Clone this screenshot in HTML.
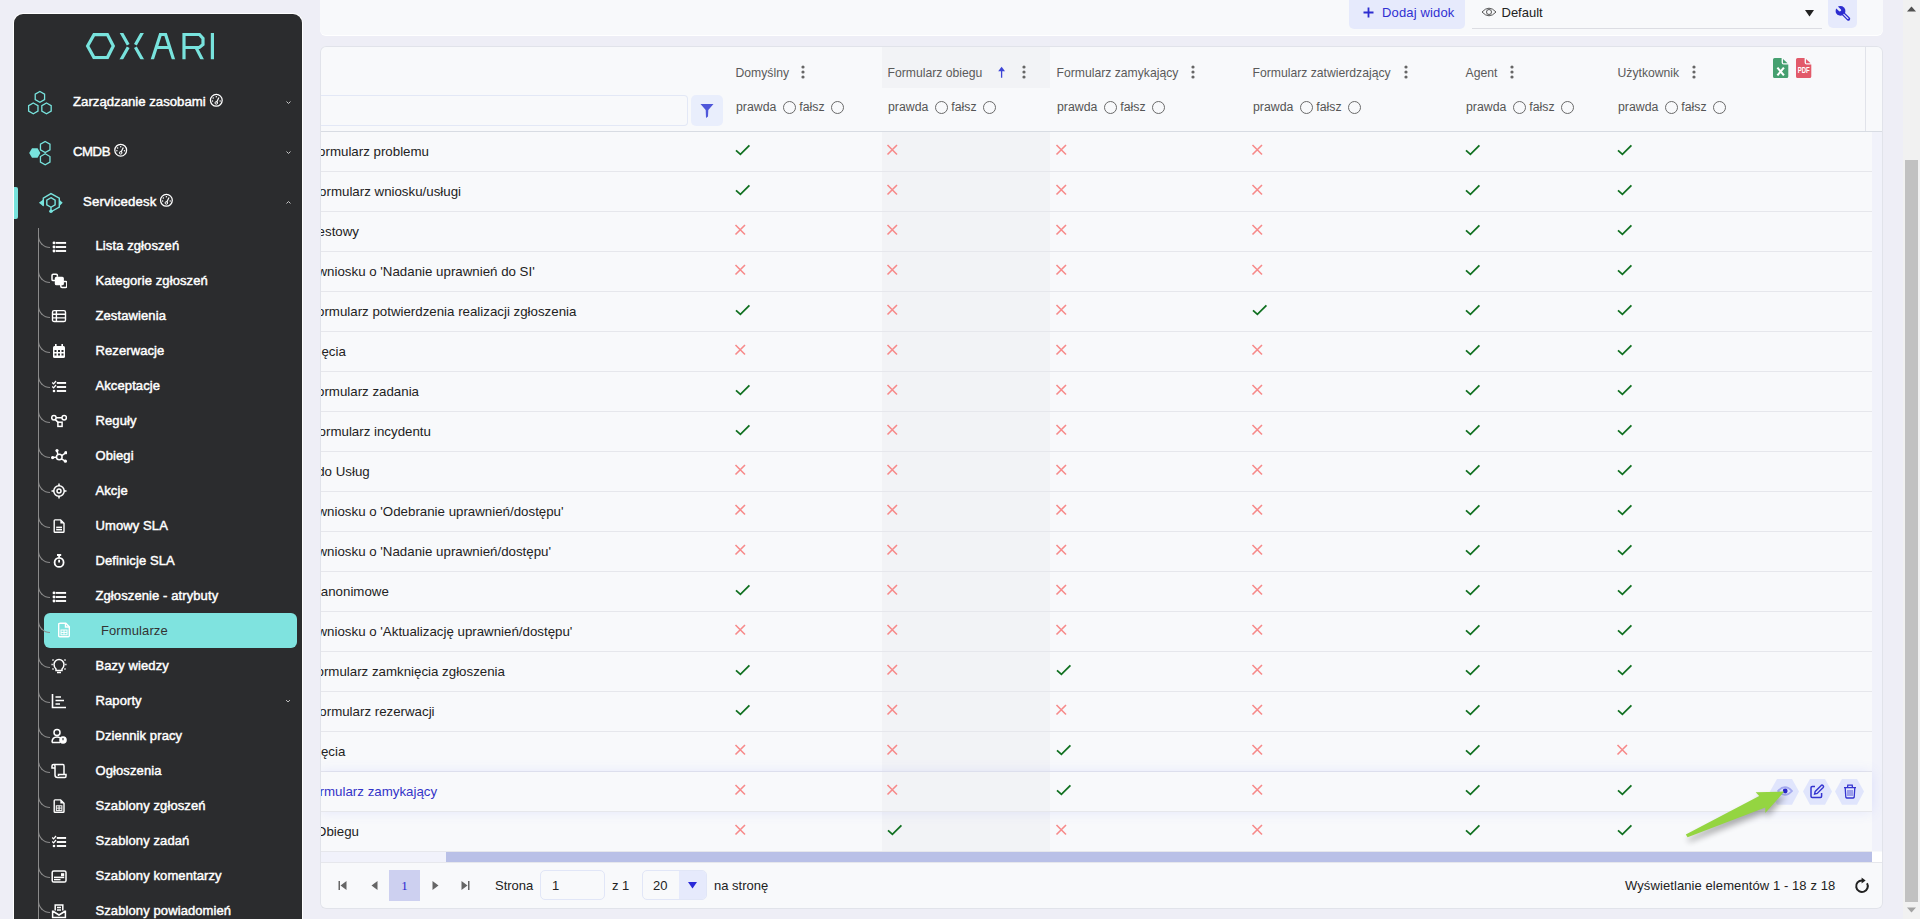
<!DOCTYPE html>
<html><head><meta charset="utf-8">
<style>
*{box-sizing:border-box;margin:0;padding:0}
html,body{width:1920px;height:919px;overflow:hidden;background:#eeeef6;font-family:"Liberation Sans",sans-serif;position:relative}
.abs{position:absolute}
#sb{position:absolute;left:14px;top:14px;width:288px;height:930px;background:#2b2c2e;border-radius:9px 9px 0 0;box-shadow:0 0 0 1px #fff}
.ti{position:absolute;left:0;height:35px;line-height:36px;color:#fff;font-weight:normal;font-size:13.4px;white-space:nowrap;-webkit-text-stroke:0.45px #fff}
.si{position:absolute;left:81.5px;letter-spacing:0.1px;height:35px;line-height:36px;color:#fff;font-weight:normal;font-size:13px;white-space:nowrap;-webkit-text-stroke:0.45px #fff}
.sic{position:absolute;left:37px;width:16px;height:16px}
.tree{position:absolute;left:24px;width:12px;height:20px;border-left:1px solid #8a8a8a;border-bottom:1px solid #8a8a8a;border-bottom-left-radius:12px}
#top{position:absolute;left:320px;top:-10px;width:1563px;height:45px;background:#f8f9fb;border-radius:0 0 6px 6px;box-shadow:0 1px 0 #fff}
#card{position:absolute;left:320px;top:46px;width:1562.5px;height:862.5px;background:#f8f9fb;box-shadow:inset 0 0 0 1px #e1e3ea;border-radius:6px;overflow:hidden}
.nm{position:absolute;height:40px;line-height:40px;font-size:13.3px;white-space:nowrap}
.rl{position:absolute;left:0;width:1552px;height:1px;background:#e6e7ec}
.ic{position:absolute;width:16px;height:12px}
.ic svg{display:block}
.hd{position:absolute;font-size:12.2px;color:#5a5a5a;white-space:nowrap;line-height:20px}
.fl{position:absolute;font-size:12.3px;color:#555;white-space:nowrap;line-height:20px}
.rad{display:inline-block;width:13px;height:13px;border:1px solid #6a6a6a;border-radius:50%;vertical-align:-3px;margin:0 3.5px 0 6.5px}
.keb{position:absolute;width:4px;height:14px}
.pf{position:absolute;font-size:13px;color:#222;white-space:nowrap}
</style></head><body>

<!-- SIDEBAR -->
<div id="sb">
  <svg class="abs" style="left:-14px;top:-14px" width="302" height="240" viewBox="0 0 302 240">
    <defs><clipPath id="lc"><rect x="80" y="32.9" width="140" height="26.3"/></clipPath></defs>
    <g fill="none" stroke="#78e3dd" stroke-width="3.2" clip-path="url(#lc)">
      <path d="M87.6 46 L94 34.6 L107.4 34.6 L113.3 46 L107.4 57.6 L94 57.6 Z"/>
      <path d="M120.4 31 L128.2 44.8 M128.2 47.2 L120.4 61 M143.2 31 L135.4 44.8 M135.4 47.2 L143.2 61"/>
      <path d="M151.8 61 L160.4 34.5 L165.6 34.5 L174 61 M156.6 47.5 L169.4 47.5"/>
      <path d="M184 61 L184 34.5 L199.4 34.5 L203 38.4 L203 44.6 L199.4 47.5 L184 47.5 M196 47.5 L203 61"/>
      <path d="M212.4 31 L212.4 61"/>
    </g>
    <g fill="none" stroke="#78e3dd" stroke-width="1.3">
      <path d="M39.90 91.50 L44.58 94.20 L44.58 99.60 L39.90 102.30 L35.22 99.60 L35.22 94.20 Z"/><path d="M33.30 103.00 L37.98 105.70 L37.98 111.10 L33.30 113.80 L28.62 111.10 L28.62 105.70 Z"/><path d="M46.50 103.00 L51.18 105.70 L51.18 111.10 L46.50 113.80 L41.82 111.10 L41.82 105.70 Z"/>
      <path d="M45.20 141.50 L49.96 144.25 L49.96 149.75 L45.20 152.50 L40.44 149.75 L40.44 144.25 Z"/><path d="M45.20 153.80 L49.96 156.55 L49.96 162.05 L45.20 164.80 L40.44 162.05 L40.44 156.55 Z"/>
    </g>
    <path d="M37.60 148.15 L40.40 153.00 L37.60 157.85 L32.00 157.85 L29.20 153.00 L32.00 148.15 Z" fill="#78e3dd"/>
    <g fill="none" stroke="#78e3dd" stroke-width="1.4">
      <path d="M43.3 205.8 L43.3 198.1 L50.96 193.6 L59.3 198.1 L59.3 207.2 L51.5 211.5"/>
      <path d="M50.96 197.70 L55.12 200.10 L55.12 204.90 L50.96 207.30 L46.80 204.90 L46.80 200.10 Z"/>
      <path d="M50.96 207.3 L50.96 210.5"/>
    </g>
    <path d="M38.9 202.8 L43.6 199.2 L43.6 206.6 Z M62.7 202.8 L59 199.2 L59 206.6 Z" fill="#78e3dd"/>
    <circle cx="50.96" cy="211.3" r="1.8" fill="#78e3dd"/>
    <g><circle cx="216.3" cy="100.3" r="5.9" fill="none" stroke="#fff" stroke-width="1.25"/><g fill="#fff"><circle cx="216.3" cy="96.8" r="0.75"/><circle cx="213.20000000000002" cy="98.0" r="0.75"/><circle cx="212.5" cy="100.89999999999999" r="0.75"/><circle cx="220.10000000000002" cy="100.89999999999999" r="0.75"/></g><path d="M216.5 102.6 L218.9 97.5" stroke="#fff" stroke-width="1.2"/><circle cx="216.3" cy="102.89999999999999" r="1.3" fill="none" stroke="#fff" stroke-width="1"/></g>
    <g><circle cx="120.7" cy="150.2" r="5.9" fill="none" stroke="#fff" stroke-width="1.25"/><g fill="#fff"><circle cx="120.7" cy="146.7" r="0.75"/><circle cx="117.6" cy="147.9" r="0.75"/><circle cx="116.9" cy="150.8" r="0.75"/><circle cx="124.5" cy="150.8" r="0.75"/></g><path d="M120.9 152.5 L123.3 147.4" stroke="#fff" stroke-width="1.2"/><circle cx="120.7" cy="152.8" r="1.3" fill="none" stroke="#fff" stroke-width="1"/></g>
    <g><circle cx="166.4" cy="200.3" r="5.9" fill="none" stroke="#fff" stroke-width="1.25"/><g fill="#fff"><circle cx="166.4" cy="196.8" r="0.75"/><circle cx="163.3" cy="198.0" r="0.75"/><circle cx="162.6" cy="200.9" r="0.75"/><circle cx="170.20000000000002" cy="200.9" r="0.75"/></g><path d="M166.6 202.60000000000002 L169.0 197.5" stroke="#fff" stroke-width="1.2"/><circle cx="166.4" cy="202.9" r="1.3" fill="none" stroke="#fff" stroke-width="1"/></g>
    <g fill="none" stroke="#c8c8c8" stroke-width="1"><path d="M286.5 101.5 L288.5 103.5 L290.5 101.5"/><path d="M286.5 151.5 L288.5 153.5 L290.5 151.5"/><path d="M286.5 203.5 L288.5 201.5 L290.5 203.5"/></g>
  </svg>
  <div class="ti" style="left:59px;top:69.5px;font-size:13.2px">Zarządzanie zasobami</div>
  <div class="ti" style="left:59px;top:119.5px;font-size:13.2px;letter-spacing:-0.45px">CMDB</div>
  <div class="abs" style="left:0;top:173px;width:4px;height:32px;background:#78e3dd;border-radius:0 2px 2px 0"></div>
  <div class="ti" style="left:69px;top:169.5px;font-size:13.2px;letter-spacing:0.15px">Servicedesk</div>
  <div class="abs" style="left:24px;top:214px;width:1px;height:720px;background:#8a8a8a"></div>
<div class="si" style="top:213.5px">Lista zgłoszeń</div>
<svg class="sic" style="top:224px" viewBox="0 0 16 16"><g fill="#fff"><circle cx="3" cy="4.9" r="1.45"/><circle cx="3" cy="9" r="1.45"/><circle cx="3" cy="13" r="1.45"/><rect x="4.8" y="3.95" width="10.3" height="1.9"/><rect x="4.8" y="8.05" width="10.3" height="1.9"/><rect x="4.8" y="12.05" width="10.3" height="1.9"/></g></svg>
<div class="tree" style="top:214px"></div>
<div class="si" style="top:248.5px">Kategorie zgłoszeń</div>
<svg class="sic" style="top:259px" viewBox="0 0 16 16"><g fill="none" stroke="#fff" stroke-width="1.5"><path d="M4.5 7.6 L2.2 7.6 Q1 7.6 1 6.4 L1 2.4 Q1 1.2 2.2 1.2 L5.2 1.2 Q6.4 1.2 6.4 2.4 L6.4 3.8"/><path d="M12.4 8.4 L14.6 8.4 Q15.8 8.4 15.8 9.6 L15.8 13.2 Q15.8 14.4 14.6 14.4 L11 14.4 Q9.8 14.4 9.8 13.2 L9.8 12"/></g><rect x="3.8" y="3.8" width="9.1" height="8.5" rx="1.6" fill="#fff"/></svg>
<div class="tree" style="top:249px"></div>
<div class="si" style="top:283.5px">Zestawienia</div>
<svg class="sic" style="top:294px" viewBox="0 0 16 16"><g fill="none" stroke="#fff" stroke-width="1.4"><rect x="1.5" y="2.6" width="13" height="10.9" rx="1.6"/><path d="M1.5 6.3 L14.5 6.3 M1.5 9.9 L14.5 9.9 M5.4 2.6 L5.4 13.5"/></g></svg>
<div class="tree" style="top:284px"></div>
<div class="si" style="top:318.5px">Rezerwacje</div>
<svg class="sic" style="top:329px" viewBox="0 0 16 16"><g fill="#fff"><rect x="2" y="3" width="12" height="12" rx="1.5"/><rect x="4" y="1" width="1.6" height="3"/><rect x="10.4" y="1" width="1.6" height="3"/></g><g fill="#2b2c2e"><rect x="3.5" y="7" width="2" height="2"/><rect x="7" y="7" width="2" height="2"/><rect x="10.5" y="7" width="2" height="2"/><rect x="3.5" y="10.5" width="2" height="2"/><rect x="7" y="10.5" width="2" height="2"/><rect x="10.5" y="10.5" width="2" height="2"/></g></svg>
<div class="tree" style="top:319px"></div>
<div class="si" style="top:353.5px">Akceptacje</div>
<svg class="sic" style="top:364px" viewBox="0 0 16 16"><g fill="none" stroke="#fff" stroke-width="1.3"><path d="M1.2 4.6 L2.6 5.9 L5 3 M1.2 8.6 L2.6 9.9 L5 7"/></g><g fill="#fff"><rect x="5.8" y="4" width="9.3" height="1.9"/><rect x="5.8" y="8.05" width="9.3" height="1.9"/><rect x="5.8" y="12.05" width="9.3" height="1.9"/><circle cx="3" cy="13" r="1.3"/></g></svg>
<div class="tree" style="top:354px"></div>
<div class="si" style="top:388.5px">Reguły</div>
<svg class="sic" style="top:399px" viewBox="0 0 16 16"><g fill="none" stroke="#fff" stroke-width="1.5"><circle cx="2.9" cy="4.8" r="2.2"/><circle cx="13.2" cy="4.8" r="2.2"/><rect x="6.9" y="9.2" width="4.2" height="4.2"/><path d="M5.1 4.8 L11 4.8 M4.3 6.6 L7.4 9.6"/></g></svg>
<div class="tree" style="top:389px"></div>
<div class="si" style="top:423.5px">Obiegi</div>
<svg class="sic" style="top:434px" viewBox="0 0 16 16"><g fill="none" stroke="#fff" stroke-width="1.5"><circle cx="8.3" cy="9" r="2.8"/><path d="M1 9.6 L5.5 9.2 M6 2.6 L6.9 6.6 M15 4.7 L10.8 7.6 M14.4 13.2 L10.4 10.8"/></g><g fill="#fff"><circle cx="1.6" cy="9.6" r="1.6"/><circle cx="6" cy="2.6" r="1.6"/><circle cx="14.8" cy="4.7" r="1.6"/><circle cx="14.4" cy="13.2" r="1.6"/></g></svg>
<div class="tree" style="top:424px"></div>
<div class="si" style="top:458.5px">Akcje</div>
<svg class="sic" style="top:469px" viewBox="0 0 16 16"><g fill="none" stroke="#fff" stroke-width="1.5"><circle cx="8" cy="8" r="5.2"/><circle cx="8" cy="8" r="2"/><path d="M8 0.5 L8 3 M8 13 L8 15.5 M0.5 8 L3 8 M13 8 L15.5 8"/></g></svg>
<div class="tree" style="top:459px"></div>
<div class="si" style="top:493.5px">Umowy SLA</div>
<svg class="sic" style="top:504px" viewBox="0 0 16 16"><path d="M4 1.9 L9.6 1.9 L13 5.3 L13 13.4 Q13 14.2 12.2 14.2 L4 14.2 Q3.2 14.2 3.2 13.4 L3.2 2.7 Q3.2 1.9 4 1.9 Z" fill="none" stroke="#fff" stroke-width="1.4"/><path d="M9.4 1.9 L9.4 5.5 L13 5.5 Z" fill="#fff"/><rect x="5.2" y="8.6" width="5.8" height="3.8" fill="#fff"/><path d="M5.2 10.5 L11 10.5" stroke="#2b2c2e" stroke-width="0.8"/></svg>
<div class="tree" style="top:494px"></div>
<div class="si" style="top:528.5px">Definicje SLA</div>
<svg class="sic" style="top:539px" viewBox="0 0 16 16"><g fill="none" stroke="#fff" stroke-width="1.8"><circle cx="8.1" cy="9.4" r="4.5"/><path d="M8.1 9.4 L8.1 6.8 M6 2 L10.2 2 M8.1 2 L8.1 4.6"/></g></svg>
<div class="tree" style="top:529px"></div>
<div class="si" style="top:563.5px">Zgłoszenie - atrybuty</div>
<svg class="sic" style="top:574px" viewBox="0 0 16 16"><g fill="#fff"><circle cx="3" cy="4.9" r="1.45"/><circle cx="3" cy="9" r="1.45"/><circle cx="3" cy="13" r="1.45"/><rect x="4.8" y="3.95" width="10.3" height="1.9"/><rect x="4.8" y="8.05" width="10.3" height="1.9"/><rect x="4.8" y="12.05" width="10.3" height="1.9"/></g></svg>
<div class="tree" style="top:564px"></div>
<div class="abs" style="left:30px;top:598.5px;width:253px;height:35px;background:#7fe3df;border-radius:6px"></div>
<div class="si" style="left:87px;top:598.5px;color:#333;font-weight:normal;font-size:13px;-webkit-text-stroke:0;left:87px">Formularze</div>
<svg class="sic" style="left:42px;top:608px" viewBox="0 0 16 16"><g fill="none" stroke="#fff" stroke-width="1.4"><path d="M3.5 1.2 L9.8 1.2 L13.3 4.7 L13.3 13.8 Q13.3 14.8 12.3 14.8 L3.7 14.8 Q2.7 14.8 2.7 13.8 L2.7 2.2 Q2.7 1.2 3.7 1.2 Z"/><path d="M9.5 1.2 L9.5 5 L13.3 5"/></g><g fill="none" stroke="#fff" stroke-width="1"><rect x="5" y="8" width="6" height="4.8"/><path d="M5 10.4 L11 10.4 M8 8 L8 12.8"/></g></svg>
<div class="tree" style="top:599px"></div>
<div class="si" style="top:633.5px">Bazy wiedzy</div>
<svg class="sic" style="top:644px" viewBox="0 0 16 16"><g fill="none" stroke="#fff" stroke-width="1.5"><path d="M5 11 Q3 9 3 6.5 A5 5 0 0 1 13 6.5 Q13 9 11 11 L11 12.5 L5 12.5 Z"/><path d="M6 14.5 L10 14.5"/><path d="M0.5 6.5 L1.8 6.5 M14.2 6.5 L15.5 6.5 M1.5 1.5 L2.5 2.5 M14.5 1.5 L13.5 2.5 M1.5 11.5 L2.5 10.5 M14.5 11.5 L13.5 10.5"/></g></svg>
<div class="tree" style="top:634px"></div>
<div class="si" style="top:668.5px">Raporty</div>
<svg class="sic" style="top:679px" viewBox="0 0 16 16"><g fill="none" stroke="#fff" stroke-width="1.6"><path d="M1.5 1 L1.5 14.5 L15 14.5"/><path d="M4.5 4 L10 4 M4.5 7.5 L13 7.5 M4.5 11 L9 11"/></g></svg>
<div class="tree" style="top:669px"></div>
<svg class="abs" style="left:270px;top:684px" width="8" height="6" viewBox="0 0 8 6"><path d="M2 2 L4 4 L6 2" fill="none" stroke="#bbb" stroke-width="1"/></svg>
<div class="si" style="top:703.5px">Dziennik pracy</div>
<svg class="sic" style="top:714px" viewBox="0 0 16 16"><g fill="none" stroke="#fff" stroke-width="1.5"><circle cx="6" cy="4.5" r="3"/><path d="M1 14.5 Q1 9 6 9 Q8 9 9 9.8 M1 14.5 L9 14.5"/></g><circle cx="12" cy="12" r="3.8" fill="#fff"/><path d="M12 10 L12 12.3" stroke="#2b2c2e" stroke-width="1.1"/></svg>
<div class="tree" style="top:704px"></div>
<div class="si" style="top:738.5px">Ogłoszenia</div>
<svg class="sic" style="top:749px" viewBox="0 0 16 16"><g fill="none" stroke="#fff" stroke-width="1.5"><path d="M4 3 L4 12 Q4 14.5 6.5 14.5 L14 14.5 Q15 14.5 15 13 L15 11.5 L7.5 11.5 L7.5 13"/><path d="M4 3 Q4 1.5 2.5 1.5 Q1 1.5 1 3 L1 5 L4 5 M2.5 1.5 L12 1.5 Q13 1.5 13 3 L13 11.5"/></g></svg>
<div class="tree" style="top:739px"></div>
<div class="si" style="top:773.5px">Szablony zgłoszeń</div>
<svg class="sic" style="top:784px" viewBox="0 0 16 16"><g fill="none" stroke="#fff" stroke-width="1.4"><path d="M4 1.9 L9.6 1.9 L13 5.3 L13 13.4 Q13 14.2 12.2 14.2 L4 14.2 Q3.2 14.2 3.2 13.4 L3.2 2.7 Q3.2 1.9 4 1.9 Z"/></g><path d="M9.4 1.9 L9.4 5.5 L13 5.5 Z" fill="#fff"/><g fill="none" stroke="#fff" stroke-width="1"><rect x="5.3" y="7.8" width="5.6" height="4.6"/><path d="M5.3 10.1 L10.9 10.1 M8.1 7.8 L8.1 12.4"/></g></svg>
<div class="tree" style="top:774px"></div>
<div class="si" style="top:808.5px">Szablony zadań</div>
<svg class="sic" style="top:819px" viewBox="0 0 16 16"><g fill="none" stroke="#fff" stroke-width="1.3"><path d="M1.2 4.6 L2.6 5.9 L5 3 M1.2 8.6 L2.6 9.9 L5 7"/></g><g fill="#fff"><rect x="5.8" y="4" width="9.3" height="1.9"/><rect x="5.8" y="8.05" width="9.3" height="1.9"/><rect x="5.8" y="12.05" width="9.3" height="1.9"/><circle cx="3" cy="13" r="1.3"/></g></svg>
<div class="tree" style="top:809px"></div>
<div class="si" style="top:843.5px">Szablony komentarzy</div>
<svg class="sic" style="top:854px" viewBox="0 0 16 16"><rect x="1.2" y="3" width="13.8" height="11" rx="1.6" fill="none" stroke="#fff" stroke-width="1.5"/><g fill="#fff"><rect x="10" y="5.2" width="3.2" height="3"/><rect x="3" y="8.6" width="10.2" height="1.6"/><rect x="3" y="11" width="6.5" height="1.3"/></g></svg>
<div class="tree" style="top:844px"></div>
<div class="si" style="top:878.5px">Szablony powiadomień</div>
<svg class="sic" style="top:889px" viewBox="0 0 16 16"><g fill="none" stroke="#fff" stroke-width="1.5"><path d="M4.2 7.5 L4.2 2 L11.8 2 L11.8 7.5"/><path d="M1.6 7.5 L1.6 14.4 L14.4 14.4 L14.4 7.5 M1.6 8 L8 12 L14.4 8"/><path d="M6 4.6 L10 4.6 M6 7 L10 7"/></g></svg>
<div class="tree" style="top:879px"></div>
</div>

<!-- TOP BAR -->
<div id="top"></div>
<div class="abs" style="left:1349px;top:0;width:116px;height:29px;background:#e6eafc;border-radius:0 0 5px 5px"></div>
<svg class="abs" style="left:1363px;top:7px" width="11" height="11" viewBox="0 0 11 11"><path d="M5.5 0.5 L5.5 10.5 M0.5 5.5 L10.5 5.5" stroke="#2d2dd0" stroke-width="1.8"/></svg>
<div class="abs" style="left:1382px;top:4px;font-size:13px;line-height:17px;color:#3030d2;white-space:nowrap;letter-spacing:0.15px">Dodaj widok</div>
<div class="abs" style="left:1472px;top:28px;width:350px;height:1px;background:#dcdde3"></div>
<svg class="abs" style="left:1481px;top:6px" width="16" height="12" viewBox="0 0 16 12"><path d="M1 6 Q8 -1.6 15 6 Q8 13.6 1 6 Z" fill="none" stroke="#555" stroke-width="1"/><circle cx="8" cy="6" r="2.5" fill="none" stroke="#555" stroke-width="1"/></svg>
<div class="abs" style="left:1501.5px;top:4px;font-size:13px;line-height:17px;color:#222;white-space:nowrap">Default</div>
<svg class="abs" style="left:1805px;top:10px" width="9" height="7" viewBox="0 0 9 7"><path d="M0 0 L9 0 L4.5 6.5 Z" fill="#222"/></svg>
<div class="abs" style="left:1828px;top:0;width:29px;height:28px;background:#e6eafc;border-radius:0 0 5px 5px"></div>
<svg class="abs" style="left:1834px;top:5px" width="18" height="18" viewBox="0 0 18 18"><circle cx="6.5" cy="5.9" r="4.9" fill="#2d2dd0"/><path d="M2.2 1.6 L5.8 5.2" stroke="#e6eafc" stroke-width="2.6" stroke-linecap="round"/><path d="M9.2 8.8 L14.4 13.9" stroke="#2d2dd0" stroke-width="3.6" stroke-linecap="round"/><path d="M9.8 9.4 L14 13.5" stroke="#e6eafc" stroke-width="1.1" stroke-linecap="round"/></svg>

<!-- TABLE CARD -->
<div id="card">
<div class="abs" style="left:561.5px;top:1.0px;width:168px;height:41px;background:#f2f3f6"></div>
<div class="abs" style="left:561.5px;top:85.0px;width:168px;height:720px;background:#f2f3f6"></div>
<div class="hd" style="left:415.5px;top:16.9px">Domyślny</div>
<div class="keb" style="left:481.0px;top:19.1px"><svg width="4" height="14" viewBox="0 0 4 14"><circle cx="2" cy="2" r="1.6" fill="#666"/><circle cx="2" cy="7" r="1.6" fill="#666"/><circle cx="2" cy="12" r="1.6" fill="#666"/></svg></div>
<div class="fl" style="left:416.0px;top:50.9px">prawda<span class="rad"></span>fałsz<span class="rad"></span></div>
<div class="hd" style="left:567.5px;top:16.9px">Formularz obiegu</div>
<div class="keb" style="left:702.0px;top:19.1px"><svg width="4" height="14" viewBox="0 0 4 14"><circle cx="2" cy="2" r="1.6" fill="#666"/><circle cx="2" cy="7" r="1.6" fill="#666"/><circle cx="2" cy="12" r="1.6" fill="#666"/></svg></div>
<div class="fl" style="left:568.0px;top:50.9px">prawda<span class="rad"></span>fałsz<span class="rad"></span></div>
<div class="hd" style="left:736.5px;top:16.9px">Formularz zamykający</div>
<div class="keb" style="left:871.0px;top:19.1px"><svg width="4" height="14" viewBox="0 0 4 14"><circle cx="2" cy="2" r="1.6" fill="#666"/><circle cx="2" cy="7" r="1.6" fill="#666"/><circle cx="2" cy="12" r="1.6" fill="#666"/></svg></div>
<div class="fl" style="left:737.0px;top:50.9px">prawda<span class="rad"></span>fałsz<span class="rad"></span></div>
<div class="hd" style="left:932.5px;top:16.9px">Formularz zatwierdzający</div>
<div class="keb" style="left:1084.0px;top:19.1px"><svg width="4" height="14" viewBox="0 0 4 14"><circle cx="2" cy="2" r="1.6" fill="#666"/><circle cx="2" cy="7" r="1.6" fill="#666"/><circle cx="2" cy="12" r="1.6" fill="#666"/></svg></div>
<div class="fl" style="left:933.0px;top:50.9px">prawda<span class="rad"></span>fałsz<span class="rad"></span></div>
<div class="hd" style="left:1145.5px;top:16.9px">Agent</div>
<div class="keb" style="left:1190.0px;top:19.1px"><svg width="4" height="14" viewBox="0 0 4 14"><circle cx="2" cy="2" r="1.6" fill="#666"/><circle cx="2" cy="7" r="1.6" fill="#666"/><circle cx="2" cy="12" r="1.6" fill="#666"/></svg></div>
<div class="fl" style="left:1146.0px;top:50.9px">prawda<span class="rad"></span>fałsz<span class="rad"></span></div>
<div class="hd" style="left:1297.5px;top:16.9px">Użytkownik</div>
<div class="keb" style="left:1372.0px;top:19.1px"><svg width="4" height="14" viewBox="0 0 4 14"><circle cx="2" cy="2" r="1.6" fill="#666"/><circle cx="2" cy="7" r="1.6" fill="#666"/><circle cx="2" cy="12" r="1.6" fill="#666"/></svg></div>
<div class="fl" style="left:1298.0px;top:50.9px">prawda<span class="rad"></span>fałsz<span class="rad"></span></div>
<svg class="abs" style="left:677.0px;top:20.0px" width="9" height="13" viewBox="0 0 9 13"><path d="M4.6 11.8 L4.6 4" fill="none" stroke="#3d44d6" stroke-width="1.3"/><path d="M1.2 5.2 L4.6 0.8 L8 5.2 Z" fill="#3d44d6"/></svg>
<div class="abs" style="left:1.0px;top:49.0px;width:367px;height:31px;border:1px solid #e3e8f6;border-left:none;border-radius:0 4px 4px 0;background:#f8f9fb"></div>
<div class="abs" style="left:371.0px;top:49.0px;width:32px;height:31px;background:#e9eefc;border-radius:5px"></div>
<svg class="abs" style="left:380.0px;top:57.0px" width="14" height="16" viewBox="0 0 14 16"><path d="M0.5 1 L13.5 1 L8.3 7 L8 13.5 L6 15 L5.7 7 Z" fill="#4f57da"/></svg>
<svg class="abs" style="left:1453.4px;top:11.8px" width="16" height="21" viewBox="0 0 16 21"><path d="M0 1.6 Q0 0 1.6 0 L8.6 0 L8.6 4.6 Q8.6 6.6 10.6 6.6 L15.3 6.6 L15.3 18.4 Q15.3 20 13.7 20 L1.6 20 Q0 20 0 18.4 Z" fill="#46a070"/><path d="M10 0.9 L14.6 5.3 L10 5.3 Z" fill="#46a070"/><path d="M4.4 9.6 L10.9 17.4 M10.9 9.6 L4.4 17.4" stroke="#fff" stroke-width="2.1"/></svg>
<svg class="abs" style="left:1476.4px;top:11.8px" width="16" height="21" viewBox="0 0 16 21"><path d="M0 1.6 Q0 0 1.6 0 L8.6 0 L8.6 4.6 Q8.6 6.6 10.6 6.6 L15.3 6.6 L15.3 18.4 Q15.3 20 13.7 20 L1.6 20 Q0 20 0 18.4 Z" fill="#e25a6a"/><path d="M10 0.9 L14.6 5.3 L10 5.3 Z" fill="#e25a6a"/><text x="1.7" y="15" font-family="Liberation Sans" font-weight="bold" font-size="8.4" fill="#fff" textLength="12" lengthAdjust="spacingAndGlyphs">PDF</text></svg>
<div class="abs" style="left:0.0px;top:85.0px;width:1562px;height:1px;background:#d8dce3"></div>
<div class="abs" style="left:1545.0px;top:1.0px;width:1px;height:84px;background:#e1e3ea"></div>
<div class="abs" style="left:1552.0px;top:86.0px;width:10px;height:719px;background:#f1f2fa"></div>
<div class="rl" style="left:0.0px;top:125.0px"></div>
<div class="nm" style="left:-1.9px;top:86.0px;color:#222">ormularz problemu</div>
<div class="ic" style="left:415.0px;top:98.0px"><svg width="16" height="12" viewBox="0 0 16 12"><path d="M1 6.3 L5.4 10.3 L14.4 1.3" fill="none" stroke="#107020" stroke-width="1.8"/></svg></div>
<div class="ic" style="left:566.0px;top:98.0px"><svg width="12" height="12" viewBox="0 0 12 12"><path d="M1.5 1 L11 10.5 M11 1 L1.5 10.5" fill="none" stroke="#f78a8a" stroke-width="1.6"/></svg></div>
<div class="ic" style="left:735.0px;top:98.0px"><svg width="12" height="12" viewBox="0 0 12 12"><path d="M1.5 1 L11 10.5 M11 1 L1.5 10.5" fill="none" stroke="#f78a8a" stroke-width="1.6"/></svg></div>
<div class="ic" style="left:931.0px;top:98.0px"><svg width="12" height="12" viewBox="0 0 12 12"><path d="M1.5 1 L11 10.5 M11 1 L1.5 10.5" fill="none" stroke="#f78a8a" stroke-width="1.6"/></svg></div>
<div class="ic" style="left:1145.0px;top:98.0px"><svg width="16" height="12" viewBox="0 0 16 12"><path d="M1 6.3 L5.4 10.3 L14.4 1.3" fill="none" stroke="#107020" stroke-width="1.8"/></svg></div>
<div class="ic" style="left:1297.0px;top:98.0px"><svg width="16" height="12" viewBox="0 0 16 12"><path d="M1 6.3 L5.4 10.3 L14.4 1.3" fill="none" stroke="#107020" stroke-width="1.8"/></svg></div>
<div class="rl" style="left:0.0px;top:165.0px"></div>
<div class="nm" style="left:-0.9px;top:126.0px;color:#222">ormularz wniosku/usługi</div>
<div class="ic" style="left:415.0px;top:138.0px"><svg width="16" height="12" viewBox="0 0 16 12"><path d="M1 6.3 L5.4 10.3 L14.4 1.3" fill="none" stroke="#107020" stroke-width="1.8"/></svg></div>
<div class="ic" style="left:566.0px;top:138.0px"><svg width="12" height="12" viewBox="0 0 12 12"><path d="M1.5 1 L11 10.5 M11 1 L1.5 10.5" fill="none" stroke="#f78a8a" stroke-width="1.6"/></svg></div>
<div class="ic" style="left:735.0px;top:138.0px"><svg width="12" height="12" viewBox="0 0 12 12"><path d="M1.5 1 L11 10.5 M11 1 L1.5 10.5" fill="none" stroke="#f78a8a" stroke-width="1.6"/></svg></div>
<div class="ic" style="left:931.0px;top:138.0px"><svg width="12" height="12" viewBox="0 0 12 12"><path d="M1.5 1 L11 10.5 M11 1 L1.5 10.5" fill="none" stroke="#f78a8a" stroke-width="1.6"/></svg></div>
<div class="ic" style="left:1145.0px;top:138.0px"><svg width="16" height="12" viewBox="0 0 16 12"><path d="M1 6.3 L5.4 10.3 L14.4 1.3" fill="none" stroke="#107020" stroke-width="1.8"/></svg></div>
<div class="ic" style="left:1297.0px;top:138.0px"><svg width="16" height="12" viewBox="0 0 16 12"><path d="M1 6.3 L5.4 10.3 L14.4 1.3" fill="none" stroke="#107020" stroke-width="1.8"/></svg></div>
<div class="rl" style="left:0.0px;top:205.0px"></div>
<div class="nm" style="left:-2.4px;top:166.0px;color:#222">estowy</div>
<div class="ic" style="left:414.0px;top:178.0px"><svg width="12" height="12" viewBox="0 0 12 12"><path d="M1.5 1 L11 10.5 M11 1 L1.5 10.5" fill="none" stroke="#f78a8a" stroke-width="1.6"/></svg></div>
<div class="ic" style="left:566.0px;top:178.0px"><svg width="12" height="12" viewBox="0 0 12 12"><path d="M1.5 1 L11 10.5 M11 1 L1.5 10.5" fill="none" stroke="#f78a8a" stroke-width="1.6"/></svg></div>
<div class="ic" style="left:735.0px;top:178.0px"><svg width="12" height="12" viewBox="0 0 12 12"><path d="M1.5 1 L11 10.5 M11 1 L1.5 10.5" fill="none" stroke="#f78a8a" stroke-width="1.6"/></svg></div>
<div class="ic" style="left:931.0px;top:178.0px"><svg width="12" height="12" viewBox="0 0 12 12"><path d="M1.5 1 L11 10.5 M11 1 L1.5 10.5" fill="none" stroke="#f78a8a" stroke-width="1.6"/></svg></div>
<div class="ic" style="left:1145.0px;top:178.0px"><svg width="16" height="12" viewBox="0 0 16 12"><path d="M1 6.3 L5.4 10.3 L14.4 1.3" fill="none" stroke="#107020" stroke-width="1.8"/></svg></div>
<div class="ic" style="left:1297.0px;top:178.0px"><svg width="16" height="12" viewBox="0 0 16 12"><path d="M1 6.3 L5.4 10.3 L14.4 1.3" fill="none" stroke="#107020" stroke-width="1.8"/></svg></div>
<div class="rl" style="left:0.0px;top:245.0px"></div>
<div class="nm" style="left:-2.5px;top:206.0px;color:#222">wniosku o &#39;Nadanie uprawnień do SI&#39;</div>
<div class="ic" style="left:414.0px;top:218.0px"><svg width="12" height="12" viewBox="0 0 12 12"><path d="M1.5 1 L11 10.5 M11 1 L1.5 10.5" fill="none" stroke="#f78a8a" stroke-width="1.6"/></svg></div>
<div class="ic" style="left:566.0px;top:218.0px"><svg width="12" height="12" viewBox="0 0 12 12"><path d="M1.5 1 L11 10.5 M11 1 L1.5 10.5" fill="none" stroke="#f78a8a" stroke-width="1.6"/></svg></div>
<div class="ic" style="left:735.0px;top:218.0px"><svg width="12" height="12" viewBox="0 0 12 12"><path d="M1.5 1 L11 10.5 M11 1 L1.5 10.5" fill="none" stroke="#f78a8a" stroke-width="1.6"/></svg></div>
<div class="ic" style="left:931.0px;top:218.0px"><svg width="12" height="12" viewBox="0 0 12 12"><path d="M1.5 1 L11 10.5 M11 1 L1.5 10.5" fill="none" stroke="#f78a8a" stroke-width="1.6"/></svg></div>
<div class="ic" style="left:1145.0px;top:218.0px"><svg width="16" height="12" viewBox="0 0 16 12"><path d="M1 6.3 L5.4 10.3 L14.4 1.3" fill="none" stroke="#107020" stroke-width="1.8"/></svg></div>
<div class="ic" style="left:1297.0px;top:218.0px"><svg width="16" height="12" viewBox="0 0 16 12"><path d="M1 6.3 L5.4 10.3 L14.4 1.3" fill="none" stroke="#107020" stroke-width="1.8"/></svg></div>
<div class="rl" style="left:0.0px;top:285.0px"></div>
<div class="nm" style="left:-3.0px;top:246.0px;color:#222">ormularz potwierdzenia realizacji zgłoszenia</div>
<div class="ic" style="left:415.0px;top:258.0px"><svg width="16" height="12" viewBox="0 0 16 12"><path d="M1 6.3 L5.4 10.3 L14.4 1.3" fill="none" stroke="#107020" stroke-width="1.8"/></svg></div>
<div class="ic" style="left:566.0px;top:258.0px"><svg width="12" height="12" viewBox="0 0 12 12"><path d="M1.5 1 L11 10.5 M11 1 L1.5 10.5" fill="none" stroke="#f78a8a" stroke-width="1.6"/></svg></div>
<div class="ic" style="left:735.0px;top:258.0px"><svg width="12" height="12" viewBox="0 0 12 12"><path d="M1.5 1 L11 10.5 M11 1 L1.5 10.5" fill="none" stroke="#f78a8a" stroke-width="1.6"/></svg></div>
<div class="ic" style="left:932.0px;top:258.0px"><svg width="16" height="12" viewBox="0 0 16 12"><path d="M1 6.3 L5.4 10.3 L14.4 1.3" fill="none" stroke="#107020" stroke-width="1.8"/></svg></div>
<div class="ic" style="left:1145.0px;top:258.0px"><svg width="16" height="12" viewBox="0 0 16 12"><path d="M1 6.3 L5.4 10.3 L14.4 1.3" fill="none" stroke="#107020" stroke-width="1.8"/></svg></div>
<div class="ic" style="left:1297.0px;top:258.0px"><svg width="16" height="12" viewBox="0 0 16 12"><path d="M1 6.3 L5.4 10.3 L14.4 1.3" fill="none" stroke="#107020" stroke-width="1.8"/></svg></div>
<div class="rl" style="left:0.0px;top:325.0px"></div>
<div class="nm" style="left:1.4px;top:286.0px;color:#222">ęcia</div>
<div class="ic" style="left:414.0px;top:298.0px"><svg width="12" height="12" viewBox="0 0 12 12"><path d="M1.5 1 L11 10.5 M11 1 L1.5 10.5" fill="none" stroke="#f78a8a" stroke-width="1.6"/></svg></div>
<div class="ic" style="left:566.0px;top:298.0px"><svg width="12" height="12" viewBox="0 0 12 12"><path d="M1.5 1 L11 10.5 M11 1 L1.5 10.5" fill="none" stroke="#f78a8a" stroke-width="1.6"/></svg></div>
<div class="ic" style="left:735.0px;top:298.0px"><svg width="12" height="12" viewBox="0 0 12 12"><path d="M1.5 1 L11 10.5 M11 1 L1.5 10.5" fill="none" stroke="#f78a8a" stroke-width="1.6"/></svg></div>
<div class="ic" style="left:931.0px;top:298.0px"><svg width="12" height="12" viewBox="0 0 12 12"><path d="M1.5 1 L11 10.5 M11 1 L1.5 10.5" fill="none" stroke="#f78a8a" stroke-width="1.6"/></svg></div>
<div class="ic" style="left:1145.0px;top:298.0px"><svg width="16" height="12" viewBox="0 0 16 12"><path d="M1 6.3 L5.4 10.3 L14.4 1.3" fill="none" stroke="#107020" stroke-width="1.8"/></svg></div>
<div class="ic" style="left:1297.0px;top:298.0px"><svg width="16" height="12" viewBox="0 0 16 12"><path d="M1 6.3 L5.4 10.3 L14.4 1.3" fill="none" stroke="#107020" stroke-width="1.8"/></svg></div>
<div class="rl" style="left:0.0px;top:365.0px"></div>
<div class="nm" style="left:-3.0px;top:326.0px;color:#222">ormularz zadania</div>
<div class="ic" style="left:415.0px;top:338.0px"><svg width="16" height="12" viewBox="0 0 16 12"><path d="M1 6.3 L5.4 10.3 L14.4 1.3" fill="none" stroke="#107020" stroke-width="1.8"/></svg></div>
<div class="ic" style="left:566.0px;top:338.0px"><svg width="12" height="12" viewBox="0 0 12 12"><path d="M1.5 1 L11 10.5 M11 1 L1.5 10.5" fill="none" stroke="#f78a8a" stroke-width="1.6"/></svg></div>
<div class="ic" style="left:735.0px;top:338.0px"><svg width="12" height="12" viewBox="0 0 12 12"><path d="M1.5 1 L11 10.5 M11 1 L1.5 10.5" fill="none" stroke="#f78a8a" stroke-width="1.6"/></svg></div>
<div class="ic" style="left:931.0px;top:338.0px"><svg width="12" height="12" viewBox="0 0 12 12"><path d="M1.5 1 L11 10.5 M11 1 L1.5 10.5" fill="none" stroke="#f78a8a" stroke-width="1.6"/></svg></div>
<div class="ic" style="left:1145.0px;top:338.0px"><svg width="16" height="12" viewBox="0 0 16 12"><path d="M1 6.3 L5.4 10.3 L14.4 1.3" fill="none" stroke="#107020" stroke-width="1.8"/></svg></div>
<div class="ic" style="left:1297.0px;top:338.0px"><svg width="16" height="12" viewBox="0 0 16 12"><path d="M1 6.3 L5.4 10.3 L14.4 1.3" fill="none" stroke="#107020" stroke-width="1.8"/></svg></div>
<div class="rl" style="left:0.0px;top:405.0px"></div>
<div class="nm" style="left:-1.4px;top:366.0px;color:#222">ormularz incydentu</div>
<div class="ic" style="left:415.0px;top:378.0px"><svg width="16" height="12" viewBox="0 0 16 12"><path d="M1 6.3 L5.4 10.3 L14.4 1.3" fill="none" stroke="#107020" stroke-width="1.8"/></svg></div>
<div class="ic" style="left:566.0px;top:378.0px"><svg width="12" height="12" viewBox="0 0 12 12"><path d="M1.5 1 L11 10.5 M11 1 L1.5 10.5" fill="none" stroke="#f78a8a" stroke-width="1.6"/></svg></div>
<div class="ic" style="left:735.0px;top:378.0px"><svg width="12" height="12" viewBox="0 0 12 12"><path d="M1.5 1 L11 10.5 M11 1 L1.5 10.5" fill="none" stroke="#f78a8a" stroke-width="1.6"/></svg></div>
<div class="ic" style="left:931.0px;top:378.0px"><svg width="12" height="12" viewBox="0 0 12 12"><path d="M1.5 1 L11 10.5 M11 1 L1.5 10.5" fill="none" stroke="#f78a8a" stroke-width="1.6"/></svg></div>
<div class="ic" style="left:1145.0px;top:378.0px"><svg width="16" height="12" viewBox="0 0 16 12"><path d="M1 6.3 L5.4 10.3 L14.4 1.3" fill="none" stroke="#107020" stroke-width="1.8"/></svg></div>
<div class="ic" style="left:1297.0px;top:378.0px"><svg width="16" height="12" viewBox="0 0 16 12"><path d="M1 6.3 L5.4 10.3 L14.4 1.3" fill="none" stroke="#107020" stroke-width="1.8"/></svg></div>
<div class="rl" style="left:0.0px;top:445.0px"></div>
<div class="nm" style="left:-2.8px;top:406.0px;color:#222">do Usług</div>
<div class="ic" style="left:414.0px;top:418.0px"><svg width="12" height="12" viewBox="0 0 12 12"><path d="M1.5 1 L11 10.5 M11 1 L1.5 10.5" fill="none" stroke="#f78a8a" stroke-width="1.6"/></svg></div>
<div class="ic" style="left:566.0px;top:418.0px"><svg width="12" height="12" viewBox="0 0 12 12"><path d="M1.5 1 L11 10.5 M11 1 L1.5 10.5" fill="none" stroke="#f78a8a" stroke-width="1.6"/></svg></div>
<div class="ic" style="left:735.0px;top:418.0px"><svg width="12" height="12" viewBox="0 0 12 12"><path d="M1.5 1 L11 10.5 M11 1 L1.5 10.5" fill="none" stroke="#f78a8a" stroke-width="1.6"/></svg></div>
<div class="ic" style="left:931.0px;top:418.0px"><svg width="12" height="12" viewBox="0 0 12 12"><path d="M1.5 1 L11 10.5 M11 1 L1.5 10.5" fill="none" stroke="#f78a8a" stroke-width="1.6"/></svg></div>
<div class="ic" style="left:1145.0px;top:418.0px"><svg width="16" height="12" viewBox="0 0 16 12"><path d="M1 6.3 L5.4 10.3 L14.4 1.3" fill="none" stroke="#107020" stroke-width="1.8"/></svg></div>
<div class="ic" style="left:1297.0px;top:418.0px"><svg width="16" height="12" viewBox="0 0 16 12"><path d="M1 6.3 L5.4 10.3 L14.4 1.3" fill="none" stroke="#107020" stroke-width="1.8"/></svg></div>
<div class="rl" style="left:0.0px;top:485.0px"></div>
<div class="nm" style="left:-2.5px;top:446.0px;color:#222">wniosku o &#39;Odebranie uprawnień/dostępu&#39;</div>
<div class="ic" style="left:414.0px;top:458.0px"><svg width="12" height="12" viewBox="0 0 12 12"><path d="M1.5 1 L11 10.5 M11 1 L1.5 10.5" fill="none" stroke="#f78a8a" stroke-width="1.6"/></svg></div>
<div class="ic" style="left:566.0px;top:458.0px"><svg width="12" height="12" viewBox="0 0 12 12"><path d="M1.5 1 L11 10.5 M11 1 L1.5 10.5" fill="none" stroke="#f78a8a" stroke-width="1.6"/></svg></div>
<div class="ic" style="left:735.0px;top:458.0px"><svg width="12" height="12" viewBox="0 0 12 12"><path d="M1.5 1 L11 10.5 M11 1 L1.5 10.5" fill="none" stroke="#f78a8a" stroke-width="1.6"/></svg></div>
<div class="ic" style="left:931.0px;top:458.0px"><svg width="12" height="12" viewBox="0 0 12 12"><path d="M1.5 1 L11 10.5 M11 1 L1.5 10.5" fill="none" stroke="#f78a8a" stroke-width="1.6"/></svg></div>
<div class="ic" style="left:1145.0px;top:458.0px"><svg width="16" height="12" viewBox="0 0 16 12"><path d="M1 6.3 L5.4 10.3 L14.4 1.3" fill="none" stroke="#107020" stroke-width="1.8"/></svg></div>
<div class="ic" style="left:1297.0px;top:458.0px"><svg width="16" height="12" viewBox="0 0 16 12"><path d="M1 6.3 L5.4 10.3 L14.4 1.3" fill="none" stroke="#107020" stroke-width="1.8"/></svg></div>
<div class="rl" style="left:0.0px;top:525.0px"></div>
<div class="nm" style="left:-2.5px;top:486.0px;color:#222">wniosku o &#39;Nadanie uprawnień/dostępu&#39;</div>
<div class="ic" style="left:414.0px;top:498.0px"><svg width="12" height="12" viewBox="0 0 12 12"><path d="M1.5 1 L11 10.5 M11 1 L1.5 10.5" fill="none" stroke="#f78a8a" stroke-width="1.6"/></svg></div>
<div class="ic" style="left:566.0px;top:498.0px"><svg width="12" height="12" viewBox="0 0 12 12"><path d="M1.5 1 L11 10.5 M11 1 L1.5 10.5" fill="none" stroke="#f78a8a" stroke-width="1.6"/></svg></div>
<div class="ic" style="left:735.0px;top:498.0px"><svg width="12" height="12" viewBox="0 0 12 12"><path d="M1.5 1 L11 10.5 M11 1 L1.5 10.5" fill="none" stroke="#f78a8a" stroke-width="1.6"/></svg></div>
<div class="ic" style="left:931.0px;top:498.0px"><svg width="12" height="12" viewBox="0 0 12 12"><path d="M1.5 1 L11 10.5 M11 1 L1.5 10.5" fill="none" stroke="#f78a8a" stroke-width="1.6"/></svg></div>
<div class="ic" style="left:1145.0px;top:498.0px"><svg width="16" height="12" viewBox="0 0 16 12"><path d="M1 6.3 L5.4 10.3 L14.4 1.3" fill="none" stroke="#107020" stroke-width="1.8"/></svg></div>
<div class="ic" style="left:1297.0px;top:498.0px"><svg width="16" height="12" viewBox="0 0 16 12"><path d="M1 6.3 L5.4 10.3 L14.4 1.3" fill="none" stroke="#107020" stroke-width="1.8"/></svg></div>
<div class="rl" style="left:0.0px;top:565.0px"></div>
<div class="nm" style="left:0.8px;top:526.0px;color:#222">anonimowe</div>
<div class="ic" style="left:415.0px;top:538.0px"><svg width="16" height="12" viewBox="0 0 16 12"><path d="M1 6.3 L5.4 10.3 L14.4 1.3" fill="none" stroke="#107020" stroke-width="1.8"/></svg></div>
<div class="ic" style="left:566.0px;top:538.0px"><svg width="12" height="12" viewBox="0 0 12 12"><path d="M1.5 1 L11 10.5 M11 1 L1.5 10.5" fill="none" stroke="#f78a8a" stroke-width="1.6"/></svg></div>
<div class="ic" style="left:735.0px;top:538.0px"><svg width="12" height="12" viewBox="0 0 12 12"><path d="M1.5 1 L11 10.5 M11 1 L1.5 10.5" fill="none" stroke="#f78a8a" stroke-width="1.6"/></svg></div>
<div class="ic" style="left:931.0px;top:538.0px"><svg width="12" height="12" viewBox="0 0 12 12"><path d="M1.5 1 L11 10.5 M11 1 L1.5 10.5" fill="none" stroke="#f78a8a" stroke-width="1.6"/></svg></div>
<div class="ic" style="left:1145.0px;top:538.0px"><svg width="16" height="12" viewBox="0 0 16 12"><path d="M1 6.3 L5.4 10.3 L14.4 1.3" fill="none" stroke="#107020" stroke-width="1.8"/></svg></div>
<div class="ic" style="left:1297.0px;top:538.0px"><svg width="16" height="12" viewBox="0 0 16 12"><path d="M1 6.3 L5.4 10.3 L14.4 1.3" fill="none" stroke="#107020" stroke-width="1.8"/></svg></div>
<div class="rl" style="left:0.0px;top:605.0px"></div>
<div class="nm" style="left:-2.5px;top:566.0px;color:#222">wniosku o &#39;Aktualizację uprawnień/dostępu&#39;</div>
<div class="ic" style="left:414.0px;top:578.0px"><svg width="12" height="12" viewBox="0 0 12 12"><path d="M1.5 1 L11 10.5 M11 1 L1.5 10.5" fill="none" stroke="#f78a8a" stroke-width="1.6"/></svg></div>
<div class="ic" style="left:566.0px;top:578.0px"><svg width="12" height="12" viewBox="0 0 12 12"><path d="M1.5 1 L11 10.5 M11 1 L1.5 10.5" fill="none" stroke="#f78a8a" stroke-width="1.6"/></svg></div>
<div class="ic" style="left:735.0px;top:578.0px"><svg width="12" height="12" viewBox="0 0 12 12"><path d="M1.5 1 L11 10.5 M11 1 L1.5 10.5" fill="none" stroke="#f78a8a" stroke-width="1.6"/></svg></div>
<div class="ic" style="left:931.0px;top:578.0px"><svg width="12" height="12" viewBox="0 0 12 12"><path d="M1.5 1 L11 10.5 M11 1 L1.5 10.5" fill="none" stroke="#f78a8a" stroke-width="1.6"/></svg></div>
<div class="ic" style="left:1145.0px;top:578.0px"><svg width="16" height="12" viewBox="0 0 16 12"><path d="M1 6.3 L5.4 10.3 L14.4 1.3" fill="none" stroke="#107020" stroke-width="1.8"/></svg></div>
<div class="ic" style="left:1297.0px;top:578.0px"><svg width="16" height="12" viewBox="0 0 16 12"><path d="M1 6.3 L5.4 10.3 L14.4 1.3" fill="none" stroke="#107020" stroke-width="1.8"/></svg></div>
<div class="rl" style="left:0.0px;top:645.0px"></div>
<div class="nm" style="left:-3.5px;top:606.0px;color:#222">ormularz zamknięcia zgłoszenia</div>
<div class="ic" style="left:415.0px;top:618.0px"><svg width="16" height="12" viewBox="0 0 16 12"><path d="M1 6.3 L5.4 10.3 L14.4 1.3" fill="none" stroke="#107020" stroke-width="1.8"/></svg></div>
<div class="ic" style="left:566.0px;top:618.0px"><svg width="12" height="12" viewBox="0 0 12 12"><path d="M1.5 1 L11 10.5 M11 1 L1.5 10.5" fill="none" stroke="#f78a8a" stroke-width="1.6"/></svg></div>
<div class="ic" style="left:736.0px;top:618.0px"><svg width="16" height="12" viewBox="0 0 16 12"><path d="M1 6.3 L5.4 10.3 L14.4 1.3" fill="none" stroke="#107020" stroke-width="1.8"/></svg></div>
<div class="ic" style="left:931.0px;top:618.0px"><svg width="12" height="12" viewBox="0 0 12 12"><path d="M1.5 1 L11 10.5 M11 1 L1.5 10.5" fill="none" stroke="#f78a8a" stroke-width="1.6"/></svg></div>
<div class="ic" style="left:1145.0px;top:618.0px"><svg width="16" height="12" viewBox="0 0 16 12"><path d="M1 6.3 L5.4 10.3 L14.4 1.3" fill="none" stroke="#107020" stroke-width="1.8"/></svg></div>
<div class="ic" style="left:1297.0px;top:618.0px"><svg width="16" height="12" viewBox="0 0 16 12"><path d="M1 6.3 L5.4 10.3 L14.4 1.3" fill="none" stroke="#107020" stroke-width="1.8"/></svg></div>
<div class="rl" style="left:0.0px;top:685.0px"></div>
<div class="nm" style="left:-0.7px;top:646.0px;color:#222">ormularz rezerwacji</div>
<div class="ic" style="left:415.0px;top:658.0px"><svg width="16" height="12" viewBox="0 0 16 12"><path d="M1 6.3 L5.4 10.3 L14.4 1.3" fill="none" stroke="#107020" stroke-width="1.8"/></svg></div>
<div class="ic" style="left:566.0px;top:658.0px"><svg width="12" height="12" viewBox="0 0 12 12"><path d="M1.5 1 L11 10.5 M11 1 L1.5 10.5" fill="none" stroke="#f78a8a" stroke-width="1.6"/></svg></div>
<div class="ic" style="left:735.0px;top:658.0px"><svg width="12" height="12" viewBox="0 0 12 12"><path d="M1.5 1 L11 10.5 M11 1 L1.5 10.5" fill="none" stroke="#f78a8a" stroke-width="1.6"/></svg></div>
<div class="ic" style="left:931.0px;top:658.0px"><svg width="12" height="12" viewBox="0 0 12 12"><path d="M1.5 1 L11 10.5 M11 1 L1.5 10.5" fill="none" stroke="#f78a8a" stroke-width="1.6"/></svg></div>
<div class="ic" style="left:1145.0px;top:658.0px"><svg width="16" height="12" viewBox="0 0 16 12"><path d="M1 6.3 L5.4 10.3 L14.4 1.3" fill="none" stroke="#107020" stroke-width="1.8"/></svg></div>
<div class="ic" style="left:1297.0px;top:658.0px"><svg width="16" height="12" viewBox="0 0 16 12"><path d="M1 6.3 L5.4 10.3 L14.4 1.3" fill="none" stroke="#107020" stroke-width="1.8"/></svg></div>
<div class="rl" style="left:0.0px;top:725.0px"></div>
<div class="nm" style="left:0.9px;top:686.0px;color:#222">ęcia</div>
<div class="ic" style="left:414.0px;top:698.0px"><svg width="12" height="12" viewBox="0 0 12 12"><path d="M1.5 1 L11 10.5 M11 1 L1.5 10.5" fill="none" stroke="#f78a8a" stroke-width="1.6"/></svg></div>
<div class="ic" style="left:566.0px;top:698.0px"><svg width="12" height="12" viewBox="0 0 12 12"><path d="M1.5 1 L11 10.5 M11 1 L1.5 10.5" fill="none" stroke="#f78a8a" stroke-width="1.6"/></svg></div>
<div class="ic" style="left:736.0px;top:698.0px"><svg width="16" height="12" viewBox="0 0 16 12"><path d="M1 6.3 L5.4 10.3 L14.4 1.3" fill="none" stroke="#107020" stroke-width="1.8"/></svg></div>
<div class="ic" style="left:931.0px;top:698.0px"><svg width="12" height="12" viewBox="0 0 12 12"><path d="M1.5 1 L11 10.5 M11 1 L1.5 10.5" fill="none" stroke="#f78a8a" stroke-width="1.6"/></svg></div>
<div class="ic" style="left:1145.0px;top:698.0px"><svg width="16" height="12" viewBox="0 0 16 12"><path d="M1 6.3 L5.4 10.3 L14.4 1.3" fill="none" stroke="#107020" stroke-width="1.8"/></svg></div>
<div class="ic" style="left:1296.0px;top:698.0px"><svg width="12" height="12" viewBox="0 0 12 12"><path d="M1.5 1 L11 10.5 M11 1 L1.5 10.5" fill="none" stroke="#f78a8a" stroke-width="1.6"/></svg></div>
<div class="abs" style="left:0.0px;top:726.0px;width:1552px;height:40px;background:transparent;box-shadow:0 0 12px rgba(90,110,255,0.13)"></div>
<div class="rl" style="left:0.0px;top:765.0px"></div>
<div class="nm" style="left:-0.4px;top:726.0px;color:#3434c8">rmularz zamykający</div>
<div class="ic" style="left:414.0px;top:738.0px"><svg width="12" height="12" viewBox="0 0 12 12"><path d="M1.5 1 L11 10.5 M11 1 L1.5 10.5" fill="none" stroke="#f78a8a" stroke-width="1.6"/></svg></div>
<div class="ic" style="left:566.0px;top:738.0px"><svg width="12" height="12" viewBox="0 0 12 12"><path d="M1.5 1 L11 10.5 M11 1 L1.5 10.5" fill="none" stroke="#f78a8a" stroke-width="1.6"/></svg></div>
<div class="ic" style="left:736.0px;top:738.0px"><svg width="16" height="12" viewBox="0 0 16 12"><path d="M1 6.3 L5.4 10.3 L14.4 1.3" fill="none" stroke="#107020" stroke-width="1.8"/></svg></div>
<div class="ic" style="left:931.0px;top:738.0px"><svg width="12" height="12" viewBox="0 0 12 12"><path d="M1.5 1 L11 10.5 M11 1 L1.5 10.5" fill="none" stroke="#f78a8a" stroke-width="1.6"/></svg></div>
<div class="ic" style="left:1145.0px;top:738.0px"><svg width="16" height="12" viewBox="0 0 16 12"><path d="M1 6.3 L5.4 10.3 L14.4 1.3" fill="none" stroke="#107020" stroke-width="1.8"/></svg></div>
<div class="ic" style="left:1297.0px;top:738.0px"><svg width="16" height="12" viewBox="0 0 16 12"><path d="M1 6.3 L5.4 10.3 L14.4 1.3" fill="none" stroke="#107020" stroke-width="1.8"/></svg></div>
<div class="rl" style="left:0.0px;top:805.0px"></div>
<div class="nm" style="left:-3.9px;top:766.0px;color:#222">Obiegu</div>
<div class="ic" style="left:414.0px;top:778.0px"><svg width="12" height="12" viewBox="0 0 12 12"><path d="M1.5 1 L11 10.5 M11 1 L1.5 10.5" fill="none" stroke="#f78a8a" stroke-width="1.6"/></svg></div>
<div class="ic" style="left:567.0px;top:778.0px"><svg width="16" height="12" viewBox="0 0 16 12"><path d="M1 6.3 L5.4 10.3 L14.4 1.3" fill="none" stroke="#107020" stroke-width="1.8"/></svg></div>
<div class="ic" style="left:735.0px;top:778.0px"><svg width="12" height="12" viewBox="0 0 12 12"><path d="M1.5 1 L11 10.5 M11 1 L1.5 10.5" fill="none" stroke="#f78a8a" stroke-width="1.6"/></svg></div>
<div class="ic" style="left:931.0px;top:778.0px"><svg width="12" height="12" viewBox="0 0 12 12"><path d="M1.5 1 L11 10.5 M11 1 L1.5 10.5" fill="none" stroke="#f78a8a" stroke-width="1.6"/></svg></div>
<div class="ic" style="left:1145.0px;top:778.0px"><svg width="16" height="12" viewBox="0 0 16 12"><path d="M1 6.3 L5.4 10.3 L14.4 1.3" fill="none" stroke="#107020" stroke-width="1.8"/></svg></div>
<div class="ic" style="left:1297.0px;top:778.0px"><svg width="16" height="12" viewBox="0 0 16 12"><path d="M1 6.3 L5.4 10.3 L14.4 1.3" fill="none" stroke="#107020" stroke-width="1.8"/></svg></div>
<div class="abs" style="left:0.0px;top:806.0px;width:1552px;height:10px;background:#f1f2fb"></div>
<div class="abs" style="left:126.0px;top:806.0px;width:1426px;height:10px;background:#b9c0e7"></div>
<div class="abs" style="left:1552.0px;top:806.0px;width:10px;height:10px;background:#fff"></div>
<div class="abs" style="left:0.0px;top:816.0px;width:1562px;height:1px;background:#e6e7ec"></div>
<svg class="abs" style="left:18.0px;top:835.0px" width="9" height="9" viewBox="0 0 9 9"><path d="M0.5 0 L2 0 L2 9 L0.5 9 Z M8.5 0 L2.5 4.5 L8.5 9 Z" fill="#666"/></svg>
<svg class="abs" style="left:51.0px;top:835.0px" width="7" height="9" viewBox="0 0 7 9"><path d="M6.5 0 L0.5 4.5 L6.5 9 Z" fill="#666"/></svg>
<div class="abs" style="left:69.0px;top:824.0px;width:31px;height:31px;background:#cdd0f0;color:#2a2ad0;font-size:13px;line-height:31px;text-align:center;font-family:Liberation Serif">1</div>
<svg class="abs" style="left:112.0px;top:835.0px" width="7" height="9" viewBox="0 0 7 9"><path d="M0.5 0 L6.5 4.5 L0.5 9 Z" fill="#666"/></svg>
<svg class="abs" style="left:141.0px;top:835.0px" width="9" height="9" viewBox="0 0 9 9"><path d="M0.5 0 L6.5 4.5 L0.5 9 Z M7 0 L8.5 0 L8.5 9 L7 9 Z" fill="#666"/></svg>
<div class="pf" style="left:175.0px;top:831.0px;line-height:17px">Strona</div>
<div class="abs" style="left:220.0px;top:824.0px;width:65px;height:30px;border:1px solid #e1e6f7;border-radius:5px"></div>
<div class="pf" style="left:232.0px;top:831.0px;line-height:17px">1</div>
<div class="pf" style="left:292.0px;top:831.0px;line-height:17px">z 1</div>
<div class="abs" style="left:322.0px;top:824.0px;width:65px;height:30px;border:1px solid #e1e6f7;border-radius:5px;overflow:hidden"><div class="abs" style="left:36px;top:0;width:30px;height:30px;background:#e6eafc"></div></div>
<div class="pf" style="left:333.0px;top:831.0px;line-height:17px">20</div>
<svg class="abs" style="left:368.0px;top:836.0px" width="9" height="7" viewBox="0 0 9 7"><path d="M0 0 L9 0 L4.5 6.5 Z" fill="#2a2ad8"/></svg>
<div class="pf" style="left:394.0px;top:831.0px;line-height:17px">na stronę</div>
<div class="pf" style="left:1305.0px;top:831.0px;line-height:17px;letter-spacing:0.09px">Wyświetlanie elementów 1 - 18 z 18</div>
<svg class="abs" style="left:1534.0px;top:831.0px" width="17" height="17" viewBox="0 0 17 17"><path d="M13.02 6.3 A5.8 5.8 0 1 1 8 3.4" fill="none" stroke="#222" stroke-width="2"/><path d="M7.6 0.4 L11.6 3.4 L7.6 6.4 Z" fill="#222"/></svg>
<div class="abs" style="left:0.0px;top:6.0px;width:1px;height:850px;background:#e1e3ea"></div>
</div>

<div class="abs" style="left:1903px;top:0;width:17px;height:919px;background:#f1f1f1"></div>
<div class="abs" style="left:1905px;top:160px;width:13px;height:742px;background:#c1c1c1"></div>
<svg class="abs" style="left:1907px;top:6px" width="9" height="6" viewBox="0 0 9 6"><path d="M0 5.5 L9 5.5 L4.5 0.5 Z" fill="#505050"/></svg>
<svg class="abs" style="left:1907px;top:907px" width="9" height="6" viewBox="0 0 9 6"><path d="M0 0.5 L9 0.5 L4.5 5.5 Z" fill="#a3a3a3"/></svg>
<svg class="abs" style="left:1769.9px;top:779px" width="29" height="26" viewBox="0 0 29 26"><path d="M7 0 L22 0 L29 12.6 L22 25.8 L7 25.8 L0 12.6 Z" fill="#e0e5fc"/></svg>
<svg class="abs" style="left:1802.6px;top:779px" width="29" height="26" viewBox="0 0 29 26"><path d="M7 0 L22 0 L29 12.6 L22 25.8 L7 25.8 L0 12.6 Z" fill="#e0e5fc"/></svg>
<svg class="abs" style="left:1835.3px;top:779px" width="29" height="26" viewBox="0 0 29 26"><path d="M7 0 L22 0 L29 12.6 L22 25.8 L7 25.8 L0 12.6 Z" fill="#e0e5fc"/></svg>
<svg class="abs" style="left:1777px;top:785px" width="16" height="12" viewBox="0 0 16 12"><path d="M1 6 Q8 -1.8 15 6 Q8 13.8 1 6 Z" fill="none" stroke="#a3a8ee" stroke-width="1.8"/><circle cx="8.2" cy="6" r="2.4" fill="#2828c8"/></svg>
<svg class="abs" style="left:1809px;top:784px" width="16" height="15" viewBox="0 0 16 15"><path d="M6 2.6 L3.2 2.6 Q2 2.6 2 3.8 L2 12.2 Q2 13.4 3.2 13.4 L11.4 13.4 Q12.6 13.4 12.6 12.2 L12.6 9" fill="none" stroke="#3535d0" stroke-width="1.5"/><path d="M5.6 10 L6.2 7.4 L12.2 1.4 Q13 0.7 13.8 1.4 L14.2 1.8 Q14.9 2.6 14.2 3.4 L8.2 9.4 Z" fill="none" stroke="#3535d0" stroke-width="1.4"/></svg>
<svg class="abs" style="left:1843px;top:784px" width="14" height="15" viewBox="0 0 14 15"><path d="M1 3.6 L13 3.6 M4.5 3.6 L4.8 1.2 L9.2 1.2 L9.5 3.6 M2.2 3.6 L2.8 13.2 Q2.9 14 3.7 14 L10.3 14 Q11.1 14 11.2 13.2 L11.8 3.6 " fill="none" stroke="#3535d0" stroke-width="1.3"/><path d="M5 6 L5 12 M7 6 L7 12 M9 6 L9 12" stroke="#3535d0" stroke-width="0.8"/></svg>
<svg class="abs" style="left:1660px;top:770px;overflow:visible" width="140" height="80" viewBox="0 0 140 80"><defs><filter id="sh" x="-50%" y="-50%" width="200%" height="200%"><feGaussianBlur stdDeviation="3"/></filter></defs><path d="M27.6 67.2 L25.8 64.6 L99.2 26.1 L95.7 22.2 L124.2 21.6 L105.3 43.1 L105.3 37.4 Z" fill="#000" opacity="0.32" filter="url(#sh)" transform="translate(1.5,4.5)"/><path d="M27.6 67.2 L25.8 64.6 L99.2 26.1 L95.7 22.2 L124.2 21.6 L105.3 43.1 L105.3 37.4 Z" fill="#94d541"/></svg>
</body></html>
